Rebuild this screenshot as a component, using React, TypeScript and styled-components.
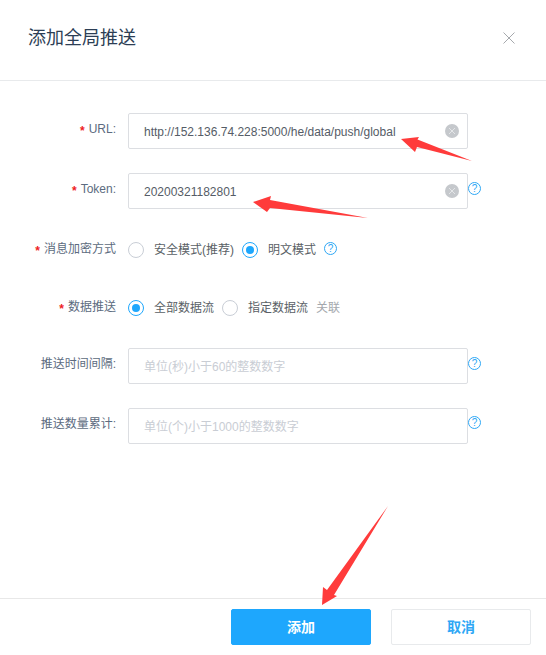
import React from "react";
import styled, { createGlobalStyle } from "styled-components";

const Global = createGlobalStyle`
  html, body { margin: 0; padding: 0; background: #fff; }
  body { font-family: "Liberation Sans", "Noto Sans CJK SC", sans-serif; }
  * { box-sizing: border-box; }
`;

const Dialog = styled.div`
  position: relative;
  width: 546px;
  height: 655px;
  background: #fff;
  display: flex;
  flex-direction: column;
  overflow: hidden;
`;

const Header = styled.header`
  height: 81px;
  flex: none;
  padding: 0 31px 5px 28px;
  display: flex;
  align-items: center;
  justify-content: space-between;
  border-bottom: 1px solid #e8eaec;
`;

const Title = styled.h2`
  margin: 0;
  font-size: 18px;
  font-weight: 400;
  line-height: 24px;
  color: #2c3e55;
`;

const CloseIcon = styled.svg`
  width: 12px;
  height: 12px;
  display: block;
`;

const Form = styled.div`
  flex: 1;
  padding-top: 32px;
  display: flex;
  flex-direction: column;
`;

const Row = styled.div<{ $height: number; $gap: number }>`
  display: flex;
  align-items: flex-start;
  height: ${(p) => p.$height}px;
  margin-bottom: ${(p) => p.$gap}px;
`;

const Label = styled.label<{ $offset: number }>`
  width: 116px;
  flex: none;
  margin-right: 12px;
  margin-top: ${(p) => p.$offset}px;
  text-align: right;
  font-size: 12px;
  line-height: 16px;
  color: #5c6b80;
  white-space: nowrap;
`;

const Star = styled.span`
  color: #ee1c25;
  margin-right: 4px;
  font-family: "Liberation Sans", sans-serif;
  font-weight: 700;
  vertical-align: -2px;
  line-height: 0;
`;

const InputWrap = styled.div`
  position: relative;
  width: 340px;
  height: 36px;
  flex: none;
`;

const TextInput = styled.input`
  width: 100%;
  height: 100%;
  padding: 1px 36px 0 15px;
  border: 1px solid #dcdee2;
  border-radius: 2px;
  outline: none;
  background: #fff;
  font-family: inherit;
  font-size: 12px;
  color: #555c66;
  &::placeholder { color: #c9cdd4; opacity: 1; }
`;

const Clear = styled.span`
  position: absolute;
  right: 9px;
  top: 11px;
  width: 14px;
  height: 14px;
  border-radius: 50%;
  background: #c5c8cc;
  display: flex;
  align-items: center;
  justify-content: center;
`;

const Help = styled.span<{ $top: number; $left: number }>`
  flex: none;
  width: 13px;
  height: 13px;
  margin-top: ${(p) => p.$top}px;
  margin-left: ${(p) => p.$left}px;
  border: 1px solid #2ea7f5;
  border-radius: 50%;
  color: #2ea7f5;
  font-size: 10px;
  line-height: 11px;
  text-align: center;
`;

const Options = styled.div`
  display: flex;
  align-items: center;
  height: 36px;
  margin-top: -1px;
`;

const Radio = styled.span<{ $on?: boolean }>`
  flex: none;
  width: 16px;
  height: 16px;
  border-radius: 50%;
  border: 1px solid ${(p) => (p.$on ? "#1ea7fd" : "#c9ced6")};
  display: flex;
  align-items: center;
  justify-content: center;
  &::after {
    content: "";
    width: 8px;
    height: 8px;
    border-radius: 50%;
    background: ${(p) => (p.$on ? "#1ea7fd" : "transparent")};
  }
`;

const OptionText = styled.span`
  margin: 0 8px 0 10px;
  font-size: 12px;
  line-height: 16px;
  color: #5a5f66;
  white-space: nowrap;
`;

const Muted = styled.span`
  font-size: 12px;
  line-height: 16px;
  color: #a4a8ad;
`;

const Footer = styled.footer`
  height: 57px;
  flex: none;
  border-top: 1px solid #e8e8e8;
  padding: 10px 15px 0 231px;
  display: flex;
  align-items: flex-start;
  gap: 20px;
`;

const Button = styled.button<{ $primary?: boolean }>`
  width: 140px;
  height: 36px;
  padding: 0 0 2px;
  border-radius: 2px;
  border: 1px solid ${(p) => (p.$primary ? "#1ea7fd" : "#e8eaec")};
  background: ${(p) => (p.$primary ? "#1ea7fd" : "#fff")};
  color: ${(p) => (p.$primary ? "#fff" : "#2ea7f5")};
  font-family: inherit;
  font-size: 14px;
  font-weight: 700;
`;

const Arrows = styled.svg`
  position: absolute;
  inset: 0;
  width: 546px;
  height: 655px;
  pointer-events: none;
`;

const HelpMark = ({ top, left }: { top: number; left: number }) => (
  <Help $top={top} $left={left}>?</Help>
);

const ClearMark = () => (
  <Clear>
    <svg width="8" height="8" viewBox="0 0 8 8">
      <path d="M1 1l6 6M7 1l-6 6" stroke="#e4e6e8" strokeWidth="1" fill="none" />
    </svg>
  </Clear>
);

export default function App() {
  return (
    <Dialog>
      <Global />
      <Header>
        <Title>添加全局推送</Title>
        <CloseIcon viewBox="0 0 12 12">
          <path d="M.5.5l11 11M11.5.5l-11 11" stroke="#a6a9ad" strokeWidth="1" fill="none" />
        </CloseIcon>
      </Header>
      <Form>
        <Row $height={36} $gap={24}>
          <Label $offset={8}><Star>*</Star>URL:</Label>
          <InputWrap>
            <TextInput readOnly value="http://152.136.74.228:5000/he/data/push/global" />
            <ClearMark />
          </InputWrap>
        </Row>
        <Row $height={36} $gap={24}>
          <Label $offset={8}><Star>*</Star>Token:</Label>
          <InputWrap>
            <TextInput readOnly value="20200321182801" />
            <ClearMark />
          </InputWrap>
          <HelpMark top={9} left={0} />
        </Row>
        <Row $height={34} $gap={24}>
          <Label $offset={8}><Star>*</Star>消息加密方式</Label>
          <Options>
            <Radio />
            <OptionText>安全模式(推荐)</OptionText>
            <Radio $on />
            <OptionText>明文模式</OptionText>
            <HelpMark top={-4} left={0} />
          </Options>
        </Row>
        <Row $height={33} $gap={24}>
          <Label $offset={8}><Star>*</Star>数据推送</Label>
          <Options>
            <Radio $on />
            <OptionText>全部数据流</OptionText>
            <Radio />
            <OptionText>指定数据流</OptionText>
            <Muted>关联</Muted>
          </Options>
        </Row>
        <Row $height={36} $gap={24}>
          <Label $offset={8}>推送时间间隔:</Label>
          <InputWrap>
            <TextInput placeholder="单位(秒)小于60的整数数字" />
          </InputWrap>
          <HelpMark top={9} left={0} />
        </Row>
        <Row $height={36} $gap={0}>
          <Label $offset={8}>推送数量累计:</Label>
          <InputWrap>
            <TextInput placeholder="单位(个)小于1000的整数数字" />
          </InputWrap>
          <HelpMark top={8} left={0} />
        </Row>
      </Form>
      <Footer>
        <Button $primary>添加</Button>
        <Button>取消</Button>
      </Footer>
      <Arrows viewBox="0 0 546 655">
        <polygon fill="#ff3b3b" points="401,139 419,137 417.5,139.5 472,161 417,147 415,152" />
        <polygon fill="#ff3b3b" points="253,202 271,196 270,200 368,218 270,208 267,212" />
        <polygon fill="#ff3b3b" points="322,605 323,587 327,590 388,506 334,595 337,596" />
      </Arrows>
    </Dialog>
  );
}
